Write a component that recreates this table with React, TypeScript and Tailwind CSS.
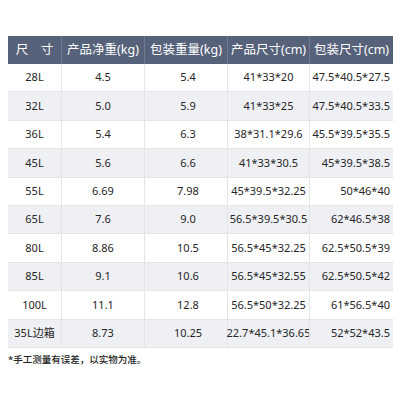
const headers = ["尺\u3000寸", "产品净重(kg)", "包装重量(kg)", "产品尺寸(cm)", "包装尺寸(cm)"];

const rows: string[][] = [
  ["28L", "4.5", "5.4", "41*33*20", "47.5*40.5*27.5"],
  ["32L", "5.0", "5.9", "41*33*25", "47.5*40.5*33.5"],
  ["36L", "5.4", "6.3", "38*31.1*29.6", "45.5*39.5*35.5"],
  ["45L", "5.6", "6.6", "41*33*30.5", "45*39.5*38.5"],
  ["55L", "6.69", "7.98", "45*39.5*32.25", "50*46*40"],
  ["65L", "7.6", "9.0", "56.5*39.5*30.5", "62*46.5*38"],
  ["80L", "8.86", "10.5", "56.5*45*32.25", "62.5*50.5*39"],
  ["85L", "9.1", "10.6", "56.5*45*32.55", "62.5*50.5*42"],
  ["100L", "11.1", "12.8", "56.5*50*32.25", "61*56.5*40"],
  ["35L边箱", "8.73", "10.25", "22.7*45.1*36.65", "52*52*43.5"],
];

const cols = "grid grid-cols-[53px_83px_83px_82px_84px]";

export default function App() {
  return (
    <div
      className="w-[400px] h-[400px] bg-white pt-[36px] pl-[8px]"
      style={{ fontFamily: '"Noto Sans", "Noto Sans CJK SC", sans-serif' }}
    >
      <div className="w-[385px]">
        <div className={`${cols} h-[28px] bg-[#56617a] text-white text-[12.5px]`}>
          {headers.map((h, i) => (
            <div
              key={i}
              className={`flex items-center justify-center ${i > 0 ? "border-l border-[#6f7a90]" : ""}`}
            >
              {h}
            </div>
          ))}
        </div>
        {rows.map((r, ri) => (
          <div
            key={ri}
            className={`${cols} h-[28.4px] text-[11px] text-[#262626] ${ri % 2 === 1 ? "bg-[#eef0f3]" : "bg-white"} border-b border-[#e3e5e9]`}
          >
            {r.map((c, ci) => (
              <div
                key={ci}
                className={`flex items-center ${ci === 4 ? "justify-end pr-[3px]" : "justify-center"} ${ci > 0 ? "border-l border-[#e3e5e9]" : ""} ${ci === 2 ? "pl-[4px]" : ""}`}
              >
                {c}
              </div>
            ))}
          </div>
        ))}
        <div className="mt-[5px] text-[9.5px] font-medium text-[#222] leading-[14px]">*手工测量有误差，以实物为准。</div>
      </div>
    </div>
  );
}
